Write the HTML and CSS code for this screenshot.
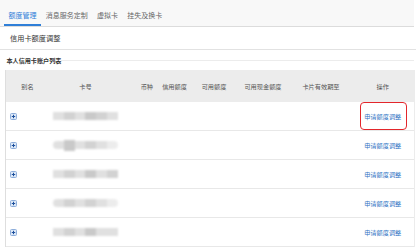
FILE: index.html
```html
<!DOCTYPE html>
<html lang="zh-CN">
<head>
<meta charset="utf-8">
<title>额度管理</title>
<link rel="stylesheet" href="styles.css">
</head>
<body>
<div class="page">
  <nav class="tabs">
    <span class="tab active">额度管理</span>
    <span class="tab">消息服务定制</span>
    <span class="tab">虚拟卡</span>
    <span class="tab">挂失及换卡</span>
  </nav>
  <div class="title">信用卡额度调整</div>
  <div class="legend"><span class="legend-text">本人信用卡账户列表</span><span class="legend-line"></span></div>
  <div class="table">
    <div class="row head">
      <div class="c">别名</div>
      <div class="c">卡号</div>
      <div class="c c3">币种</div>
      <div class="c">信用额度</div>
      <div class="c">可用额度</div>
      <div class="c">可用现金额度</div>
      <div class="c">卡片有效期至</div>
      <div class="c">操作</div>
    </div>
    <div class="row">
      <div class="c c1"><svg class="plus" viewBox="0 0 7 7" width="7" height="7"><rect x="0.5" y="0.5" width="6" height="6" rx="1" fill="#dce8f7" stroke="#8eaedb"/><path d="M3.5 1.8v3.4M1.8 3.5h3.4" stroke="#1d4f9c" stroke-width="1"/></svg></div>
      <div class="c"><div class="blur"><i class="b1"></i><i class="b2"></i><i class="b1"></i><i class="b3"></i><i class="b2"></i><i class="b1"></i></div></div>
      <div class="c"></div><div class="c"></div><div class="c"></div><div class="c"></div><div class="c"></div>
      <div class="c"><span class="mark"><a class="link">申请额度调整</a></span></div>
    </div>
    <div class="row">
      <div class="c c1"><svg class="plus" viewBox="0 0 7 7" width="7" height="7"><rect x="0.5" y="0.5" width="6" height="6" rx="1" fill="#dce8f7" stroke="#8eaedb"/><path d="M3.5 1.8v3.4M1.8 3.5h3.4" stroke="#1d4f9c" stroke-width="1"/></svg></div>
      <div class="c"><div class="blur round"><i class="b1"></i><i class="b3 tall"></i><i class="b1"></i><i class="b2"></i><i class="b1"></i><i class="b1"></i></div></div>
      <div class="c"></div><div class="c"></div><div class="c"></div><div class="c"></div><div class="c"></div>
      <div class="c"><a class="link">申请额度调整</a></div>
    </div>
    <div class="row">
      <div class="c c1"><svg class="plus" viewBox="0 0 7 7" width="7" height="7"><rect x="0.5" y="0.5" width="6" height="6" rx="1" fill="#dce8f7" stroke="#8eaedb"/><path d="M3.5 1.8v3.4M1.8 3.5h3.4" stroke="#1d4f9c" stroke-width="1"/></svg></div>
      <div class="c"><div class="blur"><i class="b1"></i><i class="b2"></i><i class="b1"></i><i class="b3"></i><i class="b1"></i><i class="b2"></i></div></div>
      <div class="c"></div><div class="c"></div><div class="c"></div><div class="c"></div><div class="c"></div>
      <div class="c"><a class="link">申请额度调整</a></div>
    </div>
    <div class="row">
      <div class="c c1"><svg class="plus" viewBox="0 0 7 7" width="7" height="7"><rect x="0.5" y="0.5" width="6" height="6" rx="1" fill="#dce8f7" stroke="#8eaedb"/><path d="M3.5 1.8v3.4M1.8 3.5h3.4" stroke="#1d4f9c" stroke-width="1"/></svg></div>
      <div class="c"><div class="blur round"><i class="b1"></i><i class="b2"></i><i class="b1"></i><i class="b2"></i><i class="b1"></i><i class="b1"></i></div></div>
      <div class="c"></div><div class="c"></div><div class="c"></div><div class="c"></div><div class="c"></div>
      <div class="c"><a class="link">申请额度调整</a></div>
    </div>
    <div class="row">
      <div class="c c1"><svg class="plus" viewBox="0 0 7 7" width="7" height="7"><rect x="0.5" y="0.5" width="6" height="6" rx="1" fill="#dce8f7" stroke="#8eaedb"/><path d="M3.5 1.8v3.4M1.8 3.5h3.4" stroke="#1d4f9c" stroke-width="1"/></svg></div>
      <div class="c"><div class="blur"><i class="b1"></i><i class="b2"></i><i class="b1"></i><i class="b3"></i><i class="b1"></i><i class="b1"></i></div></div>
      <div class="c"></div><div class="c"></div><div class="c"></div><div class="c"></div><div class="c"></div>
      <div class="c"><a class="link">申请额度调整</a></div>
    </div>
  </div>
</div>
</body>
</html>
```
FILE: styles.css
```css
html, body {
  margin: 0;
  padding: 0;
  background: #ffffff;
}
body {
  font-family: "Noto Sans CJK SC", "Noto Sans", sans-serif;
  color: #333;
  width: 416px;
  height: 251px;
  overflow: hidden;
}
.page {
  width: 414px;
}
.tabs {
  display: flex;
  height: 26px;
  padding-left: 4px;
  background: #f8f8f8;
  border-top: 1px solid #f0f0f0;
  border-bottom: 1px solid #dcdcdc;
  box-sizing: content-box;
  margin-top: -1px;
}
.tab {
  font-size: 7px;
  line-height: 7px;
  padding: 12px 4.6px 0;
  color: #666;
  height: 26px;
  box-sizing: border-box;
  white-space: nowrap;
}
.tab.active {
  color: #2f7fd8;
  border-bottom: 2px solid #2f7fd8;
}
.title {
  width: 416px;
  height: 23px;
  line-height: 23px;
  font-size: 7.2px;
  padding-left: 10px;
  box-sizing: border-box;
  color: #333;
  border-bottom: 1px solid #e2e2e2;
}
.legend {
  display: flex;
  align-items: center;
  height: 20px;
  padding-left: 6.5px;
}
.legend-text {
  font-size: 6.1px;
  font-weight: bold;
  color: #333;
  white-space: nowrap;
}
.legend-line {
  flex: 1;
  height: 1px;
  background: #ececec;
  margin-top: 1px;
}
.table {
  margin-left: 5px;
  width: 409.5px;
  border-left: 1px solid #dedede;
  border-right: 1px solid #ececec;
  box-sizing: border-box;
}
.row {
  display: grid;
  grid-template-columns: 43px 73px 35px 35px 44px 54px 62px 1fr;
  height: 29px;
  border-bottom: 1px solid #e8e8e8;
  box-sizing: border-box;
  align-items: center;
}
.row.head {
  height: 32px;
  background: #ececec;
  border-bottom: none;
}
.c {
  font-size: 6.2px;
  color: #555;
  text-align: center;
  white-space: nowrap;
  display: flex;
  justify-content: center;
  align-items: center;
}
.c3 {
  justify-content: flex-end;
  padding-right: 4px;
}
.c1 {
  justify-content: flex-start;
  padding-left: 4px;
}
.plus {
  display: block;
}
.blur {
  display: flex;
  align-items: center;
  width: 65px;
  height: 9px;
  filter: blur(1.1px);
}
.blur i {
  display: block;
  height: 8px;
  flex: 1;
}
.blur .b1 { background: #e0e0e0; }
.blur .b2 { background: #d2d2d2; }
.blur .b3 { background: #c9c9c9; }
.blur .tall { height: 11px; }
.blur.round i:first-child { border-radius: 5px 0 0 5px; }
.blur.round i:last-child { border-radius: 0 5px 5px 0; background: #ececec; }
.link {
  color: #2f74c4;
  font-size: 6.2px;
  text-decoration: none;
  cursor: pointer;
}
.mark {
  position: relative;
  display: inline-block;
}
.mark::after {
  content: "";
  position: absolute;
  left: -4.5px;
  right: -6px;
  top: -10px;
  bottom: -9px;
  border: 1.5px solid #e3262b;
  border-radius: 4px;
}
```
